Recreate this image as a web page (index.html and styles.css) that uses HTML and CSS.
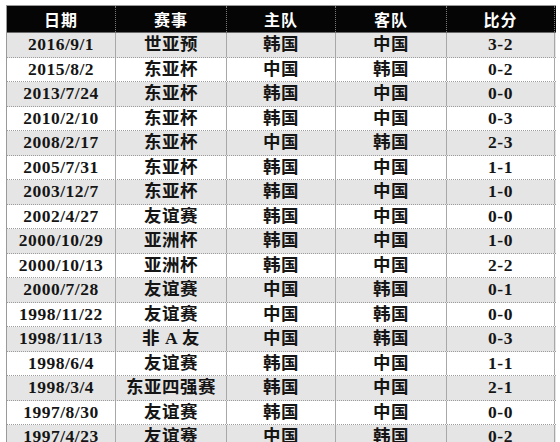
FILE: index.html
```html
<!DOCTYPE html>
<html lang="zh">
<head>
<meta charset="utf-8">
<link rel="stylesheet" href="styles.css">
</head>
<body>
<div class="table">
  <div class="row head"><div>日期</div><div>赛事</div><div>主队</div><div>客队</div><div>比分</div></div>
  <div class="row g"><div>2016/9/1</div><div>世亚预</div><div>韩国</div><div>中国</div><div>3-2</div></div>
  <div class="row"><div>2015/8/2</div><div>东亚杯</div><div>中国</div><div>韩国</div><div>0-2</div></div>
  <div class="row g"><div>2013/7/24</div><div>东亚杯</div><div>韩国</div><div>中国</div><div>0-0</div></div>
  <div class="row"><div>2010/2/10</div><div>东亚杯</div><div>韩国</div><div>中国</div><div>0-3</div></div>
  <div class="row g"><div>2008/2/17</div><div>东亚杯</div><div>中国</div><div>韩国</div><div>2-3</div></div>
  <div class="row"><div>2005/7/31</div><div>东亚杯</div><div>韩国</div><div>中国</div><div>1-1</div></div>
  <div class="row g"><div>2003/12/7</div><div>东亚杯</div><div>韩国</div><div>中国</div><div>1-0</div></div>
  <div class="row"><div>2002/4/27</div><div>友谊赛</div><div>韩国</div><div>中国</div><div>0-0</div></div>
  <div class="row g"><div>2000/10/29</div><div>亚洲杯</div><div>韩国</div><div>中国</div><div>1-0</div></div>
  <div class="row"><div>2000/10/13</div><div>亚洲杯</div><div>韩国</div><div>中国</div><div>2-2</div></div>
  <div class="row g"><div>2000/7/28</div><div>友谊赛</div><div>中国</div><div>韩国</div><div>0-1</div></div>
  <div class="row"><div>1998/11/22</div><div>友谊赛</div><div>中国</div><div>韩国</div><div>0-0</div></div>
  <div class="row g"><div>1998/11/13</div><div>非 A 友</div><div>中国</div><div>韩国</div><div>0-3</div></div>
  <div class="row"><div>1998/6/4</div><div>友谊赛</div><div>韩国</div><div>中国</div><div>1-1</div></div>
  <div class="row g"><div>1998/3/4</div><div>东亚四强赛</div><div>韩国</div><div>中国</div><div>2-1</div></div>
  <div class="row"><div>1997/8/30</div><div>友谊赛</div><div>韩国</div><div>中国</div><div>0-0</div></div>
  <div class="row g"><div>1997/4/23</div><div>友谊赛</div><div>中国</div><div>韩国</div><div>0-2</div></div>
</div>
</body>
</html>
```
FILE: styles.css
```css
html, body {
  margin: 0;
  padding: 0;
  background: #ffffff;
  overflow: hidden;
}
body {
  width: 560px;
  height: 442px;
}
.table {
  margin: 5px 0 0 6px;
  width: 549px;
  border-left: 1px solid #9a9a9a;
  border-top: 1px solid #9a9a9a;
  font-family: "Liberation Serif", "Noto Sans CJK SC", serif;
  font-weight: bold;
  color: #151515;
}
.row {
  display: grid;
  grid-template-columns: 109px 111px 109px 111px 108px;
  height: 24.53px;
  background: #ffffff;
  border-bottom: 1px dotted #9c9c9c;
  box-sizing: border-box;
}
.row.g {
  background: #e5e5e5;
}
.row > div {
  display: flex;
  align-items: center;
  justify-content: center;
  border-right: 1px solid #a8a8a8;
  font-size: 17.5px;
  letter-spacing: 0.5px;
  white-space: nowrap;
  line-height: 1;
}
.row.head {
  height: 27px;
  background: #050505;
  border-bottom: 1px solid #6a6a6a;
}
.row.head > div {
  color: #ffffff;
  font-family: "Noto Sans CJK SC", sans-serif;
  font-size: 16px;
  letter-spacing: 1px;
  border-right: 1px dotted #777777;
}
```
